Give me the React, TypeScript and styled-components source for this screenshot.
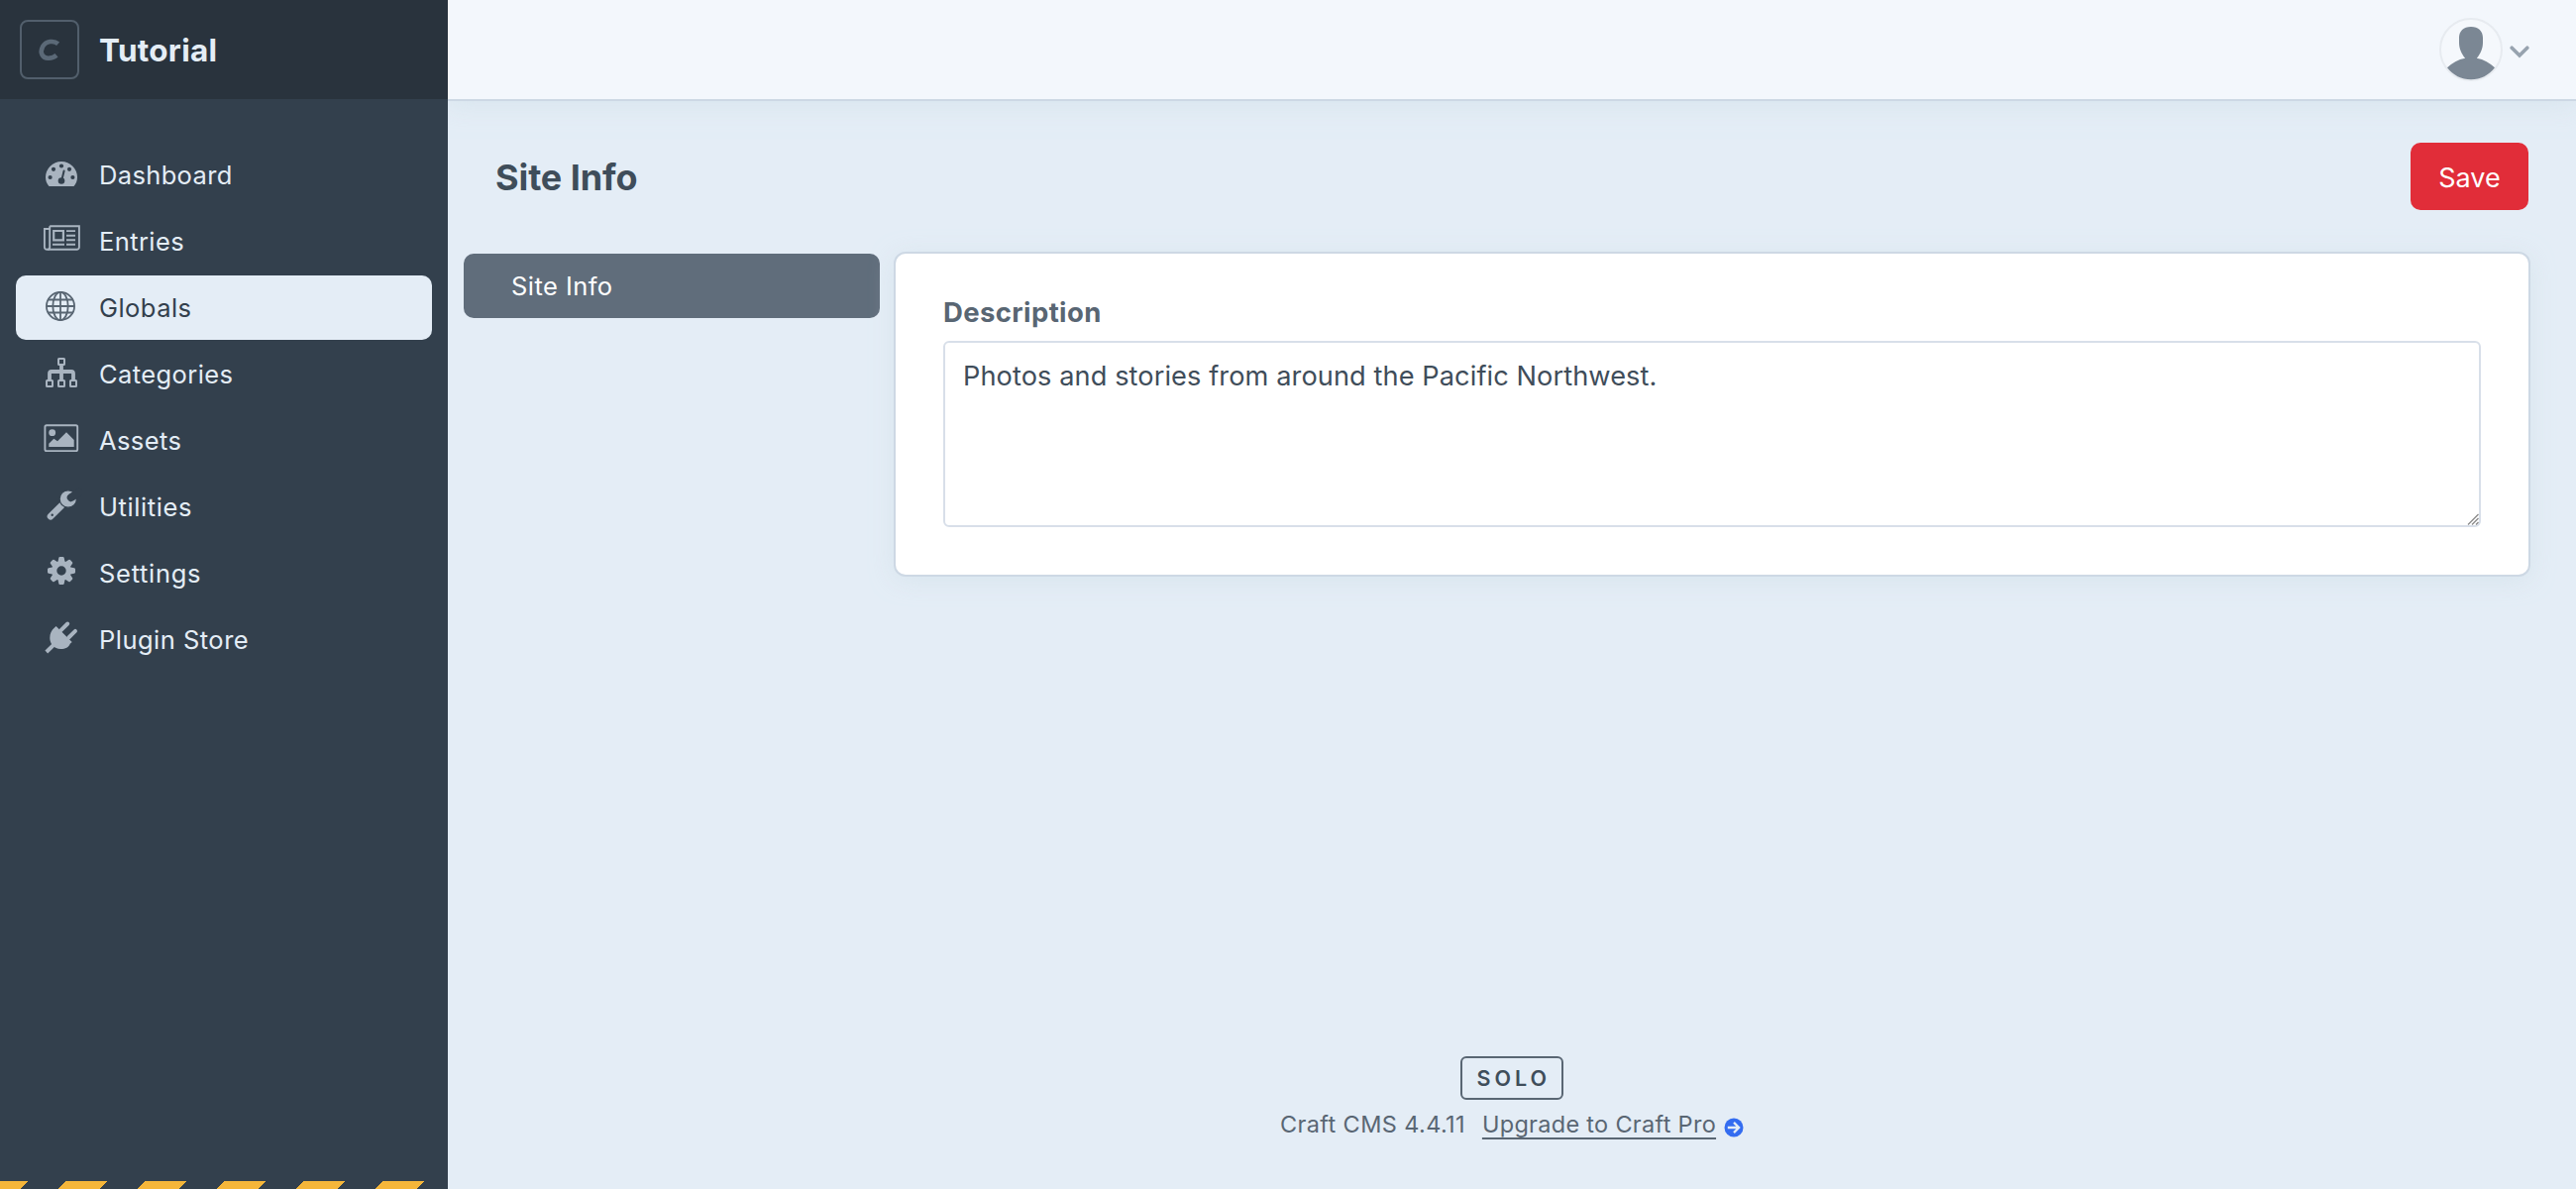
import React from "react";
import styled, { createGlobalStyle } from "styled-components";

const c = {
  side: "#33404d",
  sideHead: "#29333d",
  icon: "#a9b4c0",
  bg: "#e4edf6",
  text: "#3f4d5a",
  muted: "#596673",
  line: "#cdd8e4",
};

const shadow = `0 0 0 2px ${c.line}, 0 4px 24px rgba(205, 221, 230, 0.6)`;

const GlobalStyle = createGlobalStyle`
  *, *::before, *::after { box-sizing: border-box; }
  body {
    margin: 0;
    background: ${c.bg};
    color: ${c.text};
    font-family: Inter, "Liberation Sans", sans-serif;
    font-size: 27px;
  }
`;

const Shell = styled.div`
  display: flex;
  height: 1200px;
  overflow: hidden;
`;

const Sidebar = styled.aside`
  position: relative;
  z-index: 1;
  display: flex;
  flex-direction: column;
  flex: none;
  width: 452px;
  background: ${c.side};
`;

const SiteHeader = styled.div`
  display: flex;
  align-items: center;
  gap: 20px;
  height: 100px;
  padding-left: 20px;
  background: ${c.sideHead};
`;

const SiteIcon = styled.div`
  width: 60px;
  height: 60px;
  border: 2px solid #525f6c;
  border-radius: 8px;
  svg { display: block; }
`;

const SiteName = styled.span`
  padding-top: 2px;
  color: ${c.bg};
  font-size: 31.5px;
  font-weight: 700;
  letter-spacing: 0.25px;
  line-height: 40px;
`;

const Nav = styled.nav`
  display: flex;
  flex: 1;
  flex-direction: column;
  gap: 2px;
  padding: 44px 16px 0;
`;

const NavItem = styled.a<{ $active?: boolean; $tracking: number }>`
  display: flex;
  gap: 17px;
  height: 65px;
  padding-left: 27px;
  border-radius: 10px;
  background: ${(p) => (p.$active ? c.bg : "transparent")};
  color: ${(p) => (p.$active ? c.side : c.bg)};
  font-size: 25.5px;
  letter-spacing: ${(p) => p.$tracking}px;
  line-height: 65px;
  svg {
    flex: none;
    margin-top: 13px;
    color: ${(p) => (p.$active ? c.muted : c.icon)};
  }
`;

const DevStripe = styled.div`
  height: 8px;
  background: repeating-linear-gradient(
    135deg,
    #f5b63a 0 19.8px,
    ${c.side} 19.8px 46.67px,
    #f5b63a 46.67px 56.57px
  );
`;

const Main = styled.div`
  display: flex;
  flex: 1;
  flex-direction: column;
  min-width: 0;
`;

const TopBar = styled.header`
  display: flex;
  flex: none;
  align-items: center;
  justify-content: flex-end;
  gap: 7px;
  height: 100px;
  padding-right: 46px;
  background: #f3f7fc;
  box-shadow: ${shadow};
`;

const Chevron = styled.svg`
  margin-top: 5px;
`;

const PageHeader = styled.div`
  display: flex;
  align-items: center;
  justify-content: space-between;
  height: 68px;
  margin-top: 44px;
  padding: 0 48px;
`;

const Title = styled.h1`
  margin: 2px 0 0;
  color: ${c.text};
  font-size: 36px;
  font-weight: 700;
  letter-spacing: -0.1px;
  line-height: 44px;
`;

const SaveButton = styled.button`
  width: 119px;
  height: 68px;
  padding: 3px 0 0;
  border: 0;
  border-radius: 10px;
  background: #e12d39;
  color: #fff;
  font-family: inherit;
  font-size: 27px;
  line-height: 65px;
`;

const Body = styled.div`
  display: flex;
  align-items: flex-start;
  gap: 16px;
  margin-top: 44px;
  padding: 0 48px 0 16px;
`;

const SourceTab = styled.a`
  flex: none;
  width: 420px;
  height: 65px;
  padding-left: 48px;
  border-radius: 10px;
  background: #606d7b;
  color: #fff;
  font-size: 25.5px;
  letter-spacing: 0.45px;
  line-height: 65px;
`;

const Pane = styled.section`
  display: flex;
  flex: 1;
  flex-direction: column;
  height: 324px;
  padding: 39px 48px 48px;
  border-radius: 10px;
  background: #fff;
  box-shadow: ${shadow};
`;

const Label = styled.label`
  height: 49px;
  color: ${c.muted};
  font-size: 27.5px;
  font-weight: 700;
  letter-spacing: 0.38px;
  line-height: 40px;
`;

const Field = styled.div`
  position: relative;
  display: flex;
  flex: 1;
`;

const TextArea = styled.textarea`
  flex: 1;
  padding: 13px 18px;
  border: 2px solid #d8dfe9;
  border-radius: 6px;
  outline: 0;
  background: #fff;
  color: ${c.text};
  font-family: inherit;
  font-size: 27.2px;
  letter-spacing: 0.08px;
  line-height: 41px;
  resize: none;
`;

const Grip = styled.svg`
  position: absolute;
  right: 2px;
  bottom: 2px;
`;

const Footer = styled.footer`
  display: flex;
  flex-direction: column;
  align-items: center;
  gap: 8px;
  margin-top: auto;
  padding-bottom: 46px;
`;

const Edition = styled.div`
  width: 104px;
  height: 44px;
  padding-left: 14.5px;
  border: 2px solid ${c.muted};
  border-radius: 6px;
  color: ${c.text};
  font-size: 21.5px;
  font-weight: 600;
  letter-spacing: 4px;
  line-height: 40px;
`;

const Version = styled.div`
  display: flex;
  height: 36px;
  color: ${c.muted};
  font-size: 23.5px;
  letter-spacing: 0.38px;
  line-height: 34px;
  svg { margin: 10px 0 0 8px; }
`;

const Upgrade = styled.a`
  margin-left: 17px;
  letter-spacing: 0.3px;
  text-decoration: underline;
  text-decoration-thickness: 2px;
  text-underline-offset: 5px;
`;

const GaugeIcon = () => (
  <>
    <path d="M6.5 31C4.3 28.500 3 25.500 3 22a16 16 0 0 1 32 0c0 3.500-1.300 6.500-3.500 9z" fill="currentColor" />
    <g fill={c.side}>
      <circle cx="19" cy="10.500" r="2.100" />
      <circle cx="11" cy="13.800" r="2.100" />
      <circle cx="27" cy="13.800" r="2.100" />
      <circle cx="7.600" cy="22" r="2.100" />
      <circle cx="30.400" cy="22" r="2.100" />
      <circle cx="19" cy="25.500" r="3.300" />
    </g>
    <path d="M19.300 25L21.600 15.500" stroke={c.side} strokeWidth="2" strokeLinecap="round" />
  </>
);

const NewsIcon = () => (
  <g fill="none" stroke="currentColor" strokeWidth="1.900">
    <path d="M7.200 4.300H36.900V25.500a2.300 2.300 0 0 1-2.300 2.300H4.200A2.300 2.300 0 0 1 1.900 25.500V7H7.200" />
    <path d="M7.200 4.300V25.500a2.300 2.300 0 0 1-2 2.300" />
    <path d="M11.200 9h9.700v9.300h-9.700z" strokeWidth="2.200" />
    <path d="M24 9.100h9M24 13.800h9M24 18.300h9M24 22.800h9M10 22.800h12" />
  </g>
);

const GlobeIcon = () => (
  <g fill="none" stroke="currentColor" strokeWidth="1.800">
    <circle cx="18" cy="18" r="14.100" />
    <ellipse cx="18" cy="18" rx="7.700" ry="14.100" />
    <path d="M18 4v28M4 18h28M5.500 11.500h25M5.500 24.500h25" />
  </g>
);

const TreeIcon = () => (
  <g fill="none" stroke="currentColor">
    <g strokeWidth="2">
      <rect x="16" y="4" width="6" height="6" rx="0.500" />
      <rect x="4" y="26" width="6" height="6" rx="0.500" />
      <rect x="16" y="26" width="6" height="6" rx="0.500" />
      <rect x="28" y="26" width="6" height="6" rx="0.500" />
    </g>
    <path d="M19 11v14M7 25v-6q0-2 2-2h20q2 0 2 2v6" strokeWidth="3.800" />
  </g>
);

const ImageIcon = () => (
  <>
    <rect x="2.400" y="4.300" width="32.800" height="25.800" rx="1.600" fill="none" stroke="currentColor" strokeWidth="1.900" />
    <circle cx="9.700" cy="11.700" r="3.400" fill="currentColor" />
    <path d="M6.300 26v-3.300l5-4.900 3.700 2.400 9-9 7.700 7.800v7z" fill="currentColor" />
  </>
);

const WrenchIcon = () => (
  <>
    <path d="M8.100 29.200L20 17.400" stroke="currentColor" strokeWidth="6.800" strokeLinecap="round" />
    <circle cx="9.700" cy="27.700" r="1.200" fill={c.side} />
    <circle cx="25.800" cy="11.500" r="8.700" fill="currentColor" stroke={c.side} strokeWidth="1.300" />
    <path d="M28.700 10.200L37 5" stroke={c.side} strokeWidth="8" strokeLinecap="round" />
  </>
);

const GearIcon = () => (
  <>
    {[0, 45, 90, 135, 180, 225, 270, 315].map((a) => (
      <path
        key={a}
        d="M15.300 9L16.300 4q0.200-1 1.200-1h3q1 0 1.200 1l1 5z"
        transform={`rotate(${a} 19 17)`}
        fill="currentColor"
      />
    ))}
    <circle cx="19" cy="17" r="7.300" fill="none" stroke="currentColor" strokeWidth="5.200" />
  </>
);

const PlugIcon = () => (
  <>
    <path d="M25.200 3.500L18.500 10.200M33 10.800L26.300 17.500" stroke="currentColor" strokeWidth="3.900" strokeLinecap="round" />
    <path d="M13.600 6L29.700 22l-2 1.700C26.500 27 23 29 18.300 29 11.500 29 7.300 23.500 7.300 18c0-4.500 1.700-8 4.700-10.500z" fill="currentColor" />
    <path d="M11 25L3.800 32" stroke="currentColor" strokeWidth="3.900" />
  </>
);

const items = [
  { name: "Dashboard", Icon: GaugeIcon, tracking: 0.35 },
  { name: "Entries", Icon: NewsIcon, tracking: 0.4 },
  { name: "Globals", Icon: GlobeIcon, active: true, tracking: 0.45 },
  { name: "Categories", Icon: TreeIcon, tracking: 0.4 },
  { name: "Assets", Icon: ImageIcon, tracking: 0.4 },
  { name: "Utilities", Icon: WrenchIcon, tracking: 0.6 },
  { name: "Settings", Icon: GearIcon, tracking: 0.7 },
  { name: "Plugin Store", Icon: PlugIcon, tracking: 0.48 },
];

export default function App() {
  return (
    <Shell>
      <GlobalStyle />
      <Sidebar>
        <SiteHeader>
          <SiteIcon>
            <svg width="56" height="56" viewBox="22 22 56 56" fill="none">
              <path
                d="M58.600 44.200C54.500 40.500 46.300 41.300 43 47.200C39.800 53.500 43 58.900 49 58.700C52.300 58.500 54.800 57.700 57 55.700"
                stroke="#5b6977"
                strokeWidth="4.600"
              />
            </svg>
          </SiteIcon>
          <SiteName>Tutorial</SiteName>
        </SiteHeader>
        <Nav>
          {items.map(({ name, Icon, active, tracking }) => (
            <NavItem key={name} $active={active} $tracking={tracking}>
              <svg width="40" height="39" viewBox="0 0 40 39" fill="none">
                <Icon />
              </svg>
              {name}
            </NavItem>
          ))}
        </Nav>
        <DevStripe />
      </Sidebar>
      <Main>
        <TopBar>
          <svg width="64" height="64" viewBox="0 0 64 64">
            <circle cx="32" cy="32" r="31" fill="#f5f8fc" stroke="#e7ebf0" strokeWidth="2" />
            <path
              d="M32 9c7.500 0 12 4.500 12 11v5c0 6-2.500 11.500-6.200 15.800C45 42 51 45.500 56 50.300A30 30 0 0 1 8 50.300C13 45.500 19 42 26.200 40.800C22.500 36.500 20 31 20 25v-5C20 13.500 24.500 9 32 9z"
              fill="#7b8794"
            />
          </svg>
          <Chevron width="21" height="16" viewBox="2533 45 21 16" fill="none">
            <path
              d="M2535.200 48.200L2543 56L2550.800 48.200"
              stroke="#97a3af"
              strokeWidth="3.600"
              strokeLinecap="round"
            />
          </Chevron>
        </TopBar>
        <PageHeader>
          <Title>Site Info</Title>
          <SaveButton>Save</SaveButton>
        </PageHeader>
        <Body>
          <SourceTab>Site Info</SourceTab>
          <Pane>
            <Label htmlFor="description">Description</Label>
            <Field>
              <TextArea
                id="description"
                readOnly
                spellCheck={false}
                value="Photos and stories from around the Pacific Northwest."
              />
              <Grip width="12" height="12" viewBox="0 0 12 12" fill="none">
                <path d="M1 11.500L11.500 1M5 11.500L11.500 5M9 11.500L11.500 9" stroke="#8a8a8a" strokeWidth="1.300" />
              </Grip>
            </Field>
          </Pane>
        </Body>
        <Footer>
          <Edition>SOLO</Edition>
          <Version>
            Craft CMS 4.4.11
            <Upgrade>Upgrade to Craft Pro</Upgrade>
            <svg width="20" height="20" viewBox="0 0 20 20" fill="none">
              <circle cx="10" cy="10" r="9.500" fill="#336cf0" />
              <path d="M3.800 10H14.500M10 4.900L15.100 10L10 15.100" stroke={c.bg} strokeWidth="2.300" />
            </svg>
          </Version>
        </Footer>
      </Main>
    </Shell>
  );
}
